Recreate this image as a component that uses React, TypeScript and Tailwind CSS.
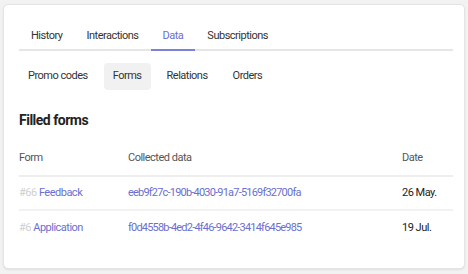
import React from "react";

const TABS = ["History", "Interactions", "Data", "Subscriptions"];
const SUBTABS = ["Promo codes", "Forms", "Relations", "Orders"];

const ROWS = [
  { id: "#66", name: "Feedback", data: "eeb9f27c-190b-4030-91a7-5169f32700fa", date: "26 May." },
  { id: "#6", name: "Application", data: "f0d4558b-4ed2-4f46-9642-3414f645e985", date: "19 Jul." },
];

export default function App() {
  return (
    <div
      className="w-[468px] h-[274px] bg-[#f2f2f2] pt-[4px] pl-[3px] pr-[3px] pb-[5px] text-[#333] tracking-[-0.5px]"
      style={{ fontFamily: "Roboto, 'Liberation Sans', sans-serif" }}
    >
      <div className="h-full bg-white rounded-[5px] border border-[#e4e4e4] shadow-[0_1px_2px_rgba(0,0,0,0.08)] pt-[15px] pl-[15px] pr-[11px]">
        {/* tabs */}
        <div className="flex border-b-2 border-[#e6e6e6] h-[31px]">
          {TABS.map((t) => (
            <div
              key={t}
              className={
                t === "Data"
                  ? "px-[12px] pt-[8px] text-[11px] text-[#6a6fd0] border-b-2 border-[#7c82d8] -mb-[2px]"
                  : "px-[12px] pt-[8px] text-[11px] text-[#333]"
              }
            >
              {t}
            </div>
          ))}
        </div>

        {/* sub tabs */}
        <div className="flex gap-[7px] mt-[12px]">
          {SUBTABS.map((t) => (
            <div
              key={t}
              className={
                t === "Forms"
                  ? "h-[27px] px-[9px] flex items-center text-[11px] rounded-[4px] bg-[#f1f1f1]"
                  : "h-[27px] px-[9px] flex items-center text-[11px]"
              }
            >
              {t}
            </div>
          ))}
        </div>

        <div className="mt-[20px] text-[14px] font-bold text-[#222]">Filled forms</div>

        {/* table */}
        <div className="mt-[10px] text-[11px]">
          <div className="flex h-[36px] items-center border-b-2 border-[#eeeeee] text-[#555]">
            <div className="w-[109px]">Form</div>
            <div className="w-[274px]">Collected data</div>
            <div>Date</div>
          </div>
          {ROWS.map((r, i) => (
            <div
              key={r.id}
              className={
                i === 0
                  ? "flex h-[34px] items-center border-b-2 border-[#f2f2f2]"
                  : "flex h-[34px] items-center"
              }
            >
              <div className="w-[109px]">
                <span className="text-[#cfcfcf]">{r.id}</span>{" "}
                <span className="text-[#6a6fd0]">{r.name}</span>
              </div>
              <div className="w-[274px] text-[#6a6fd0] tracking-[-0.8px]">{r.data}</div>
              <div className="text-[#222]">{r.date}</div>
            </div>
          ))}
        </div>
      </div>
    </div>
  );
}
